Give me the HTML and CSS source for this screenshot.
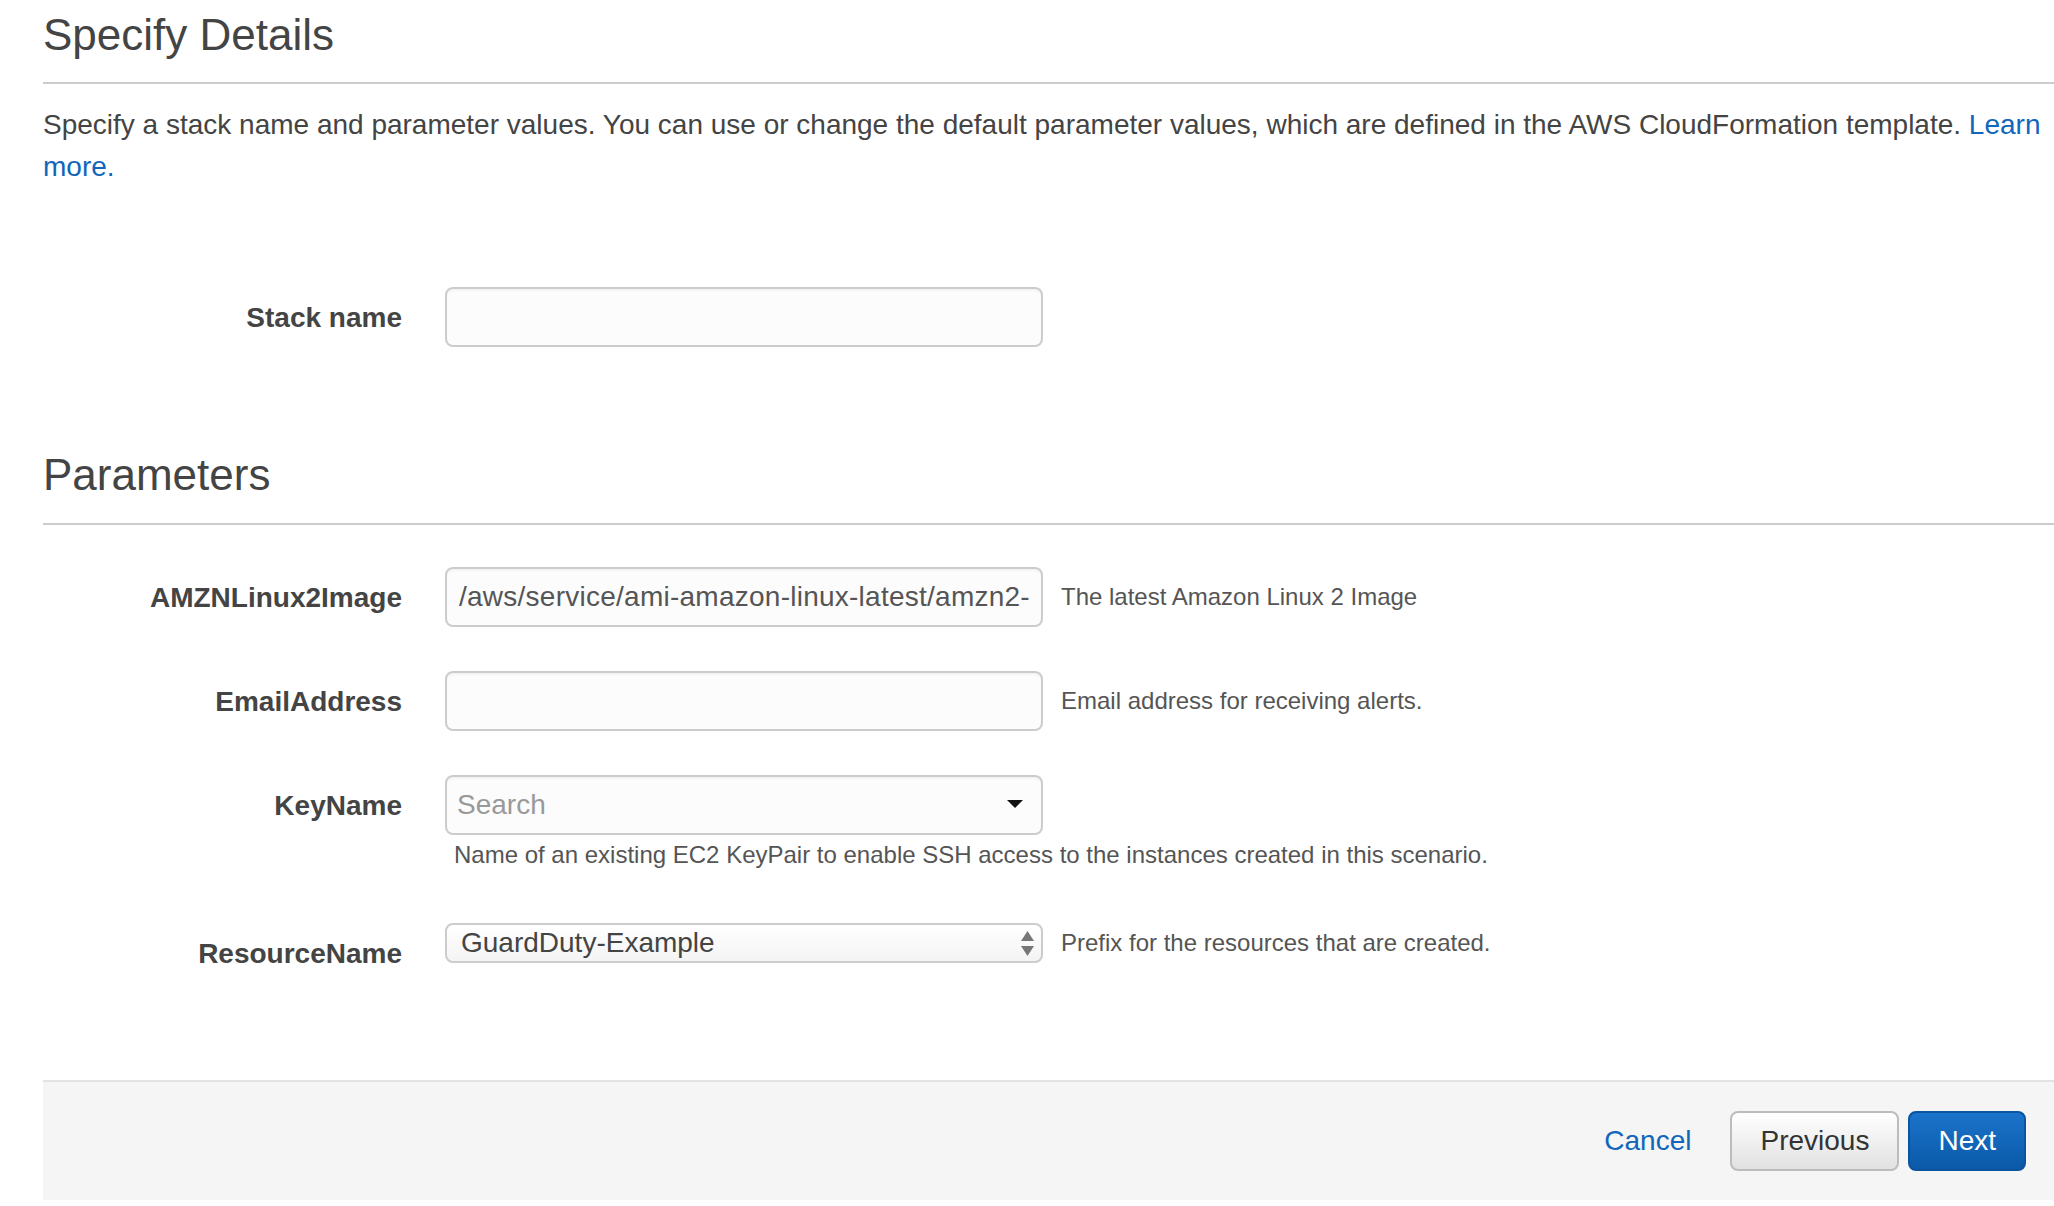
FILE: index.html
```html
<!DOCTYPE html>
<html lang="en">
<head>
<meta charset="utf-8">
<title>Specify Details</title>
<link rel="stylesheet" href="styles.css">
</head>
<body>
<div class="page">
  <div class="section-head">
    <h1 class="section-title">Specify Details</h1>
  </div>
  <p class="desc">Specify a stack name and parameter values. You can use or change the default parameter values, which are defined in the AWS CloudFormation template. <a class="link" href="#">Learn more.</a></p>

  <div class="form-row stack-row">
    <label class="lbl">Stack name</label>
    <div class="ctl">
      <input class="field" type="text">
    </div>
  </div>

  <div class="section-head params-head">
    <h2 class="section-title">Parameters</h2>
  </div>

  <div class="form-row first-param">
    <label class="lbl">AMZNLinux2Image</label>
    <div class="ctl">
      <div class="field wrap-field">
        <input class="inner-input path-input" type="text" value="/aws/service/ami-amazon-linux-latest/amzn2-ami-hvm-x86_64-gp2">
      </div>
      <span class="help">The latest Amazon Linux 2 Image</span>
    </div>
  </div>

  <div class="form-row">
    <label class="lbl">EmailAddress</label>
    <div class="ctl">
      <input class="field" type="text">
      <span class="help">Email address for receiving alerts.</span>
    </div>
  </div>

  <div class="form-row key-row">
    <label class="lbl">KeyName</label>
    <div class="ctl ctl-stack">
      <div class="field combo">
        <input class="inner-input" type="text" placeholder="Search">
        <svg class="caret" width="16" height="8" viewBox="0 0 16 8"><polygon points="0,0 16,0 8,8" fill="#111"/></svg>
      </div>
      <span class="help help-below">Name of an existing EC2 KeyPair to enable SSH access to the instances created in this scenario.</span>
    </div>
  </div>

  <div class="form-row res-row">
    <label class="lbl">ResourceName</label>
    <div class="ctl">
      <div class="field select">
        <span class="select-value">GuardDuty-Example</span>
        <svg class="stepper" width="13" height="25" viewBox="0 0 13 25"><polygon points="6.5,0 13,10 0,10" fill="#777"/><polygon points="0,15 13,15 6.5,25" fill="#777"/></svg>
      </div>
      <span class="help">Prefix for the resources that are created.</span>
    </div>
  </div>

  <div class="footer">
    <a class="cancel" href="#">Cancel</a>
    <button class="btn btn-default" type="button">Previous</button>
    <button class="btn btn-primary" type="button">Next</button>
  </div>
</div>
</body>
</html>
```

FILE: styles.css
```css
html, body {
  margin: 0;
  padding: 0;
  overflow: hidden;
  background: #fff;
}

body {
  font-family: "Liberation Sans", Arial, Helvetica, sans-serif;
  color: #444;
}

.page {
  padding-left: 43px;
}

.section-head {
  border-bottom: 2px solid #ccc;
  padding-bottom: 23px;
}

.section-title {
  margin: 11px 0 0;
  font-size: 44px;
  line-height: 48px;
  font-weight: normal;
  color: #444;
}

.params-head {
  margin-top: 104px;
  padding-bottom: 24px;
}

.params-head .section-title {
  margin-top: 0;
}

.desc {
  margin: 20px -40px 0 0;
  font-size: 28px;
  line-height: 42px;
  color: #444;
}

.link {
  color: #1166bb;
  text-decoration: none;
}

.form-row {
  display: flex;
  align-items: flex-start;
  margin-bottom: 44px;
}

.stack-row {
  margin-top: 99px;
  margin-bottom: 0;
}

.first-param {
  margin-top: 42px;
}

.key-row {
  margin-bottom: 50px;
}

.res-row {
  margin-bottom: 0;
}

.lbl {
  width: 359px;
  flex: none;
  margin-right: 43px;
  text-align: right;
  font-size: 28px;
  line-height: 42px;
  padding-top: 10px;
  font-weight: bold;
  color: #444;
}

.ctl {
  display: flex;
  align-items: center;
}

.ctl-stack {
  flex-direction: column;
  align-items: flex-start;
}

.field {
  box-sizing: border-box;
  width: 598px;
  height: 60px;
  border: 2px solid #ccc;
  border-radius: 8px;
  background: #fcfcfc;
  box-shadow: inset 0 2px 2px rgba(0, 0, 0, 0.04);
  font-family: "Liberation Sans", Arial, Helvetica, sans-serif;
  font-size: 28px;
  color: #555;
  padding: 0 12px;
  outline: none;
  flex: none;
}

.wrap-field {
  display: flex;
  align-items: center;
  padding: 0 12px;
}

.inner-input {
  flex: 1;
  min-width: 0;
  width: 100%;
  border: none;
  background: transparent;
  outline: none;
  padding: 0;
  font-family: "Liberation Sans", Arial, Helvetica, sans-serif;
  font-size: 28px;
  color: #555;
}

.path-input {
  letter-spacing: 0.25px;
}

.inner-input::placeholder {
  color: #999;
}

.help {
  margin-left: 18px;
  font-size: 24px;
  line-height: 32px;
  color: #555;
  white-space: nowrap;
}

.help-below {
  margin-left: 9px;
  margin-top: 2px;
  line-height: 36px;
}

.combo {
  display: flex;
  align-items: center;
  padding: 0 18px 0 10px;
}

.caret {
  flex: none;
  margin-bottom: 2px;
}

.select {
  height: 40px;
  display: flex;
  align-items: center;
  justify-content: space-between;
  padding: 0 7px 0 14px;
  background: linear-gradient(#ffffff, #f4f4f4);
  box-shadow: none;
  color: #444;
}

.select-value {
  line-height: 36px;
}

.stepper {
  flex: none;
}

.footer {
  margin-top: 105px;
  border-top: 2px solid #e3e3e3;
  background: #f5f5f5;
  padding: 29px 28px 29px 0;
  display: flex;
  justify-content: flex-end;
  align-items: center;
}

.cancel {
  color: #1166bb;
  text-decoration: none;
  font-size: 28px;
  margin-right: 39px;
}

.btn {
  box-sizing: border-box;
  height: 60px;
  border-radius: 8px;
  font-family: "Liberation Sans", Arial, Helvetica, sans-serif;
  font-size: 28px;
  padding: 0 28px;
  cursor: pointer;
}

.btn-default {
  background: linear-gradient(#ffffff, #e1e1e1);
  border: 2px solid #bcbcbc;
  color: #333;
  margin-right: 9px;
}

.btn-primary {
  background: linear-gradient(#1b74cb, #0a59a7);
  border: 2px solid #0a54a0;
  color: #fff;
  padding: 0 28px;
}
```
